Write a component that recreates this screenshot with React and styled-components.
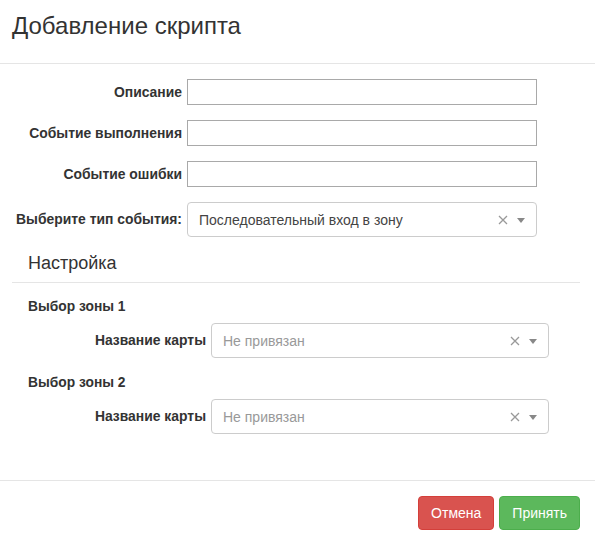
import React from "react";
import styled, { createGlobalStyle } from "styled-components";

const Global = createGlobalStyle`
  html, body { margin: 0; padding: 0; background: #fff; }
  body { font-family: "Liberation Sans", Arial, sans-serif; color: #333; font-size: 14px; }
  * { box-sizing: border-box; }
`;

const Modal = styled.div`
  width: 595px;
  height: 542px;
  background: #fff;
  display: flex;
  flex-direction: column;
`;

const Header = styled.div`
  height: 64px;
  padding: 11px 12px 0;
  border-bottom: 1px solid #e5e5e5;
`;

const Title = styled.h4`
  margin: 0;
  font-size: 24px;
  font-weight: 400;
  line-height: 30px;
  color: #333;
`;

const Body = styled.div`
  flex: 1;
  padding: 15px 0 0;
`;

const Row = styled.div`
  display: flex;
  align-items: ${(p) => (p.$top ? "flex-start" : "center")};
  margin-bottom: 15px;
`;

const Label = styled.label`
  width: ${(p) => p.$w}px;
  flex: none;
  text-align: right;
  font-weight: 700;
  font-size: 13.9px;
  color: #333;
  padding-right: 5px;
  padding-top: ${(p) => p.$pt || 0}px;
  line-height: 16px;
  white-space: nowrap;
`;

const Input = styled.input`
  width: 350px;
  height: 26px;
  border: 1px solid #a9a9a9;
  border-radius: 0;
  padding: 2px 6px;
  font: inherit;
  outline: none;
`;

const SelectBox = styled.div`
  width: ${(p) => p.$w}px;
  height: 35px;
  border: 1px solid #ccc;
  border-radius: 4px;
  display: flex;
  align-items: center;
  padding: 0 11px 0 11px;
  background: #fff;
`;

const SelectText = styled.span`
  flex: 1;
  font-size: 14px;
  color: ${(p) => (p.$placeholder ? "#999" : "#444")};
  white-space: nowrap;
`;

const Clear = styled.span`
  display: flex;
  width: 10px;
  height: 10px;
  margin-right: 9px;
`;

const Caret = styled.span`
  width: 0;
  height: 0;
  border-style: solid;
  border-width: 5px 4px 0 4px;
  border-color: #888 transparent transparent transparent;
  margin-top: 1px;
`;

const Section = styled.div`
  margin: 0 15px 0 12px;
`;

const Legend = styled.div`
  font-size: 18px;
  color: #333;
  padding: 0 0 8px 16px;
  line-height: 22px;
  border-bottom: 1px solid #e5e5e5;
  margin-bottom: 16px;
`;

const Zone = styled.div`
  padding-left: 16px;
  margin-bottom: ${(p) => p.$mb}px;
`;

const ZoneTitle = styled.div`
  font-weight: 700;
  font-size: 13.8px;
  line-height: 16px;
  margin-bottom: 8px;
`;

const Footer = styled.div`
  border-top: 1px solid #e5e5e5;
  padding: 15px 15px 0;
  display: flex;
  justify-content: flex-end;
  gap: 5px;
  height: 62px;
`;

const Button = styled.button`
  font-family: inherit;
  font-size: 14px;
  line-height: 20px;
  padding: 6px 12px;
  height: 34px;
  border-radius: 4px;
  color: #fff;
  border: 1px solid ${(p) => (p.$variant === "danger" ? "#d43f3a" : "#4cae4c")};
  background: ${(p) => (p.$variant === "danger" ? "#d9534f" : "#5cb85c")};
  cursor: pointer;
`;

const ClearIcon = () => (
  <Clear>
    <svg width="10" height="10" viewBox="0 0 10 10">
      <path d="M1 1L9 9M9 1L1 9" stroke="#999" strokeWidth="1.3" fill="none" />
    </svg>
  </Clear>
);

const Select = ({ w, text, placeholder }) => (
  <SelectBox $w={w}>
    <SelectText $placeholder={placeholder}>{text}</SelectText>
    <ClearIcon />
    <Caret />
  </SelectBox>
);

export default function App() {
  return (
    <>
      <Global />
      <Modal>
        <Header>
          <Title>Добавление скрипта</Title>
        </Header>
        <Body>
          <Row>
            <Label $w={187}>Описание</Label>
            <Input />
          </Row>
          <Row>
            <Label $w={187}>Событие выполнения</Label>
            <Input />
          </Row>
          <Row>
            <Label $w={187}>Событие ошибки</Label>
            <Input />
          </Row>
          <Row $top>
            <Label $w={187} $pt={9}>Выберите тип события:</Label>
            <Select w={350} text="Последовательный вход в зону" />
          </Row>
          <Section>
            <Legend>Настройка</Legend>
            <Zone $mb={17}>
              <ZoneTitle>Выбор зоны 1</ZoneTitle>
              <Row $top>
                <Label $w={183} $pt={9}>Название карты</Label>
                <Select w={338} text="Не привязан" placeholder />
              </Row>
            </Zone>
            <Zone $mb={0}>
              <ZoneTitle>Выбор зоны 2</ZoneTitle>
              <Row $top>
                <Label $w={183} $pt={9}>Название карты</Label>
                <Select w={338} text="Не привязан" placeholder />
              </Row>
            </Zone>
          </Section>
        </Body>
        <Footer>
          <Button $variant="danger">Отмена</Button>
          <Button $variant="success">Принять</Button>
        </Footer>
      </Modal>
    </>
  );
}
